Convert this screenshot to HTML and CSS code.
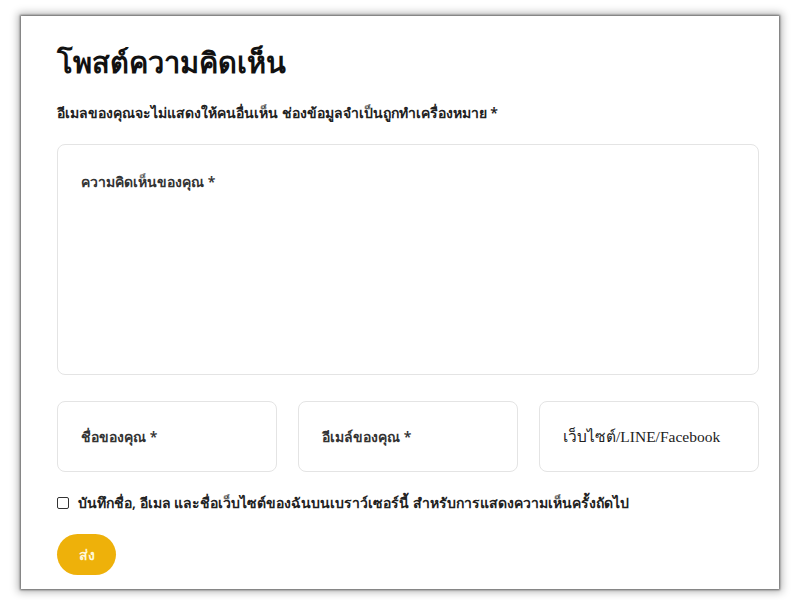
FILE: index.html
```html
<!DOCTYPE html>
<html lang="th">
<head>
<meta charset="utf-8">
<link rel="stylesheet" href="styles.css">
</head>
<body>
<div class="card">
  <h2 class="title">โพสต์ความคิดเห็น</h2>
  <p class="note">อีเมลของคุณจะไม่แสดงให้คนอื่นเห็น ช่องข้อมูลจำเป็นถูกทำเครื่องหมาย *</p>
  <div class="field area"><span class="ph">ความคิดเห็นของคุณ *</span></div>
  <div class="row">
    <div class="field small"><span class="ph">ชื่อของคุณ *</span></div>
    <div class="field small"><span class="ph">อีเมล์ของคุณ *</span></div>
    <div class="field small"><span class="ph serif">เว็บไซต์/LINE/Facebook</span></div>
  </div>
  <label class="check"><span class="box"></span><span>บันทึกชื่อ, อีเมล และชื่อเว็บไซต์ของฉันบนเบราว์เซอร์นี้ สำหรับการแสดงความเห็นครั้งถัดไป</span></label>
  <button class="btn">ส่ง</button>
</div>
</body>
</html>
```
FILE: styles.css
```css
html, body { margin: 0; background: #fff; }
body {
  padding: 16px 21px 11px 21px;
  font-family: "Noto Sans", "DejaVu Sans", sans-serif;
  color: #1c1c1c;
}
.card {
  width: 758px;
  height: 573px;
  box-sizing: border-box;
  background: #fff;
  box-shadow: 0 0 2px 1px rgba(0,0,0,.5), 0 0 8px 3px rgba(0,0,0,.28);
  padding: 29px 20px 0 36px;
}
.title {
  margin: 0;
  font-size: 29px;
  font-weight: 700;
  line-height: 34px;
  color: #111;
}
.note {
  margin: 24px 0 0;
  font-size: 14px;
  font-weight: 600;
  line-height: 20px;
  color: #222;
}
.field {
  border: 1px solid #e4e4e4;
  border-radius: 8px;
  box-sizing: border-box;
  background: #fff;
}
.area {
  margin-top: 21px;
  height: 231px;
  padding: 25px 23px;
}
.ph {
  font-size: 14px;
  font-weight: 600;
  color: #333;
}
.serif { font-family: "Liberation Serif", serif; font-weight: 400; font-size: 15.5px; color: #222; }
.row {
  display: flex;
  gap: 21px;
  margin-top: 26px;
}
.small {
  flex: 1;
  height: 71px;
  display: flex;
  align-items: center;
  padding: 0 23px;
}
.check {
  display: flex;
  align-items: center;
  gap: 9px;
  margin-top: 20px;
  font-size: 14px;
  font-weight: 600;
  color: #222;
}
.box {
  width: 10px;
  height: 10px;
  border: 1px solid #333;
  border-radius: 2px;
}
.btn {
  display: block;
  margin-top: 20px;
  width: 59px;
  height: 41px;
  border: none;
  border-radius: 21px;
  background: #eeb10a;
  color: #fff8d8;
  font-family: inherit;
  font-size: 14px;
  font-weight: 700;
}
```
